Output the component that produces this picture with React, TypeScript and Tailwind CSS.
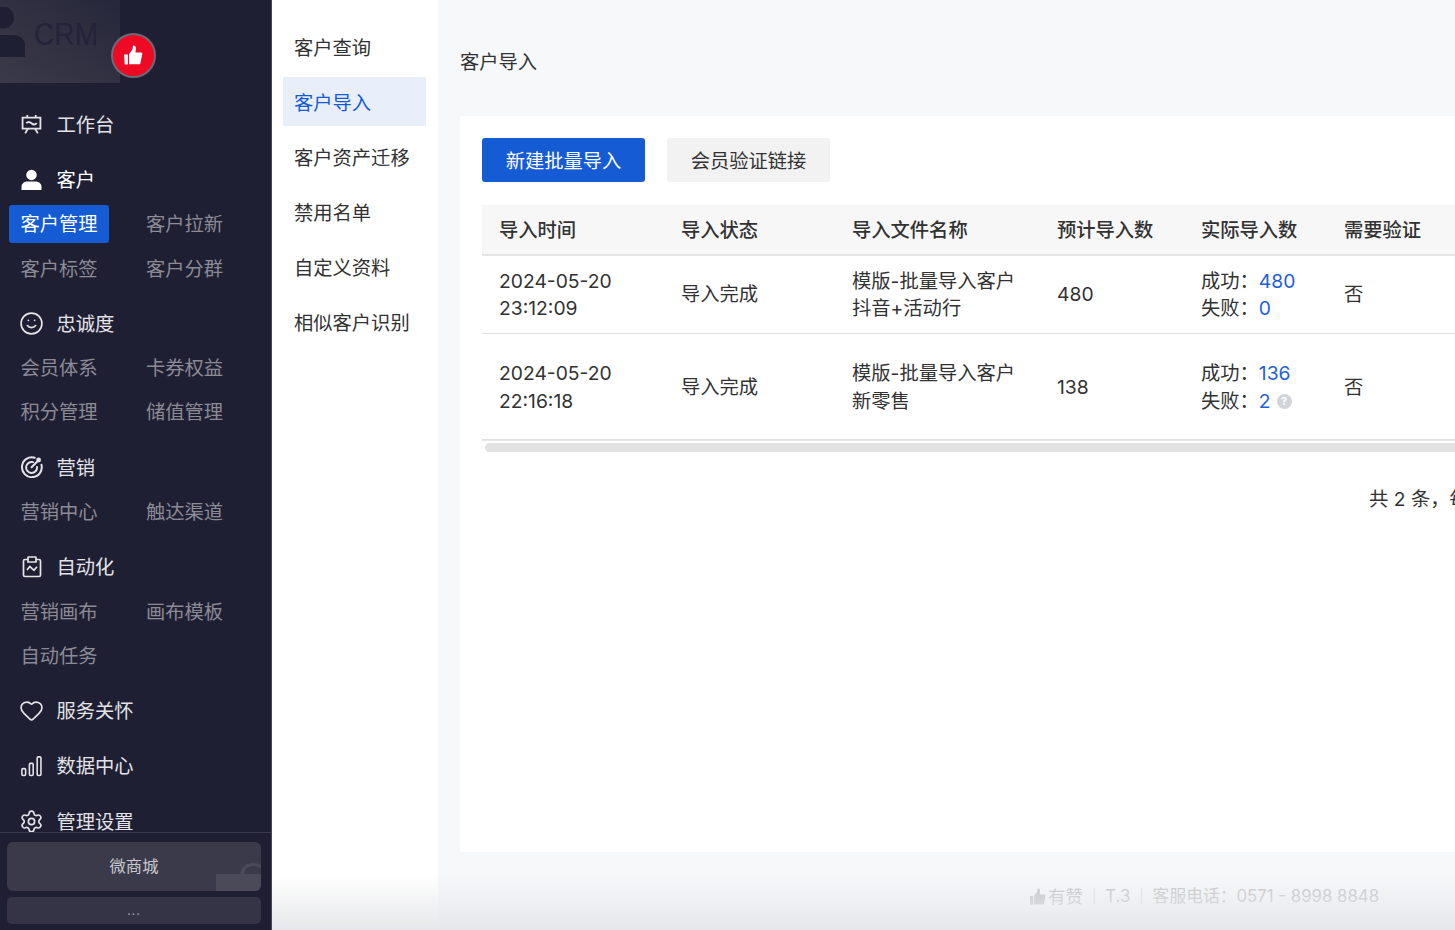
import { Heart, Settings, Smile } from 'lucide-react';
import type { ReactNode } from 'react';

const font = 'font-["Inter","Noto_Sans_CJK_SC",sans-serif]';

function WorkbenchIcon() {
  return (
    <svg viewBox="0 0 20 20" className="w-[21px] h-[21px]" fill="none" stroke="currentColor" strokeWidth="1.7">
      <path d="M1.5 3.5h17v10.5h-17z" />
      <path d="M5 8.800c1.600-1.600 3.200-1.600 5 0s3.400 1.600 5 0" />
      <path d="M6 1v2.500M14 1v2.500M6.500 14l-2.500 4.500M13.500 14l2.500 4.500" />
    </svg>
  );
}

function PersonIcon() {
  return (
    <svg viewBox="0 0 20 20" className="w-[21px] h-[21px]" fill="currentColor">
      <circle cx="10" cy="5.600" r="5" />
      <path d="M0.500 20v-3c0-3 2.600-5 5.500-5h8c2.900 0 5.500 2 5.500 5v3z" />
    </svg>
  );
}

function TargetIcon() {
  return (
    <svg viewBox="0 0 20 20" className="w-[22px] h-[22px] shrink-0" fill="none" stroke="currentColor" strokeWidth="1.800" strokeLinecap="round">
      <path d="M12.500 1.600A9 9 0 1 0 18.600 8" />
      <path d="M11 5.600A5 5 0 1 0 14.600 10" />
      <path d="M9.600 10.200l5-5" />
      <circle cx="16" cy="3.600" r="2.200" fill="currentColor" stroke="none" />
    </svg>
  );
}

function ClipboardIcon() {
  return (
    <svg viewBox="0 0 20 22" className="w-[20px] h-[22px] shrink-0" fill="none" stroke="currentColor" strokeWidth="1.700">
      <path d="M6 3.500H3a1.500 1.500 0 0 0-1.500 1.500v14A1.500 1.500 0 0 0 3 20.500h14a1.500 1.500 0 0 0 1.500-1.500V5A1.500 1.500 0 0 0 17 3.500h-3" />
      <path d="M6.500 1h7a.5.5 0 0 1 .5.5V6H6V1.500a.5.5 0 0 1 .5-.5z" />
      <path d="M5 14l2.800-3.500 4.200 3.800 3-3.500" />
    </svg>
  );
}

function BarsIcon() {
  return (
    <svg viewBox="0 0 20 20" className="w-[21px] h-[21px]" fill="none" stroke="currentColor" strokeWidth="1.500">
      <rect x="0.800" y="12" width="3.600" height="6.600" rx="1.200" />
      <rect x="8" y="7" width="3.600" height="11.600" rx="1.200" />
      <rect x="15.400" y="0.800" width="3.600" height="17.800" rx="1.200" />
    </svg>
  );
}

function ThumbIcon({ className }: { className: string }) {
  return (
    <svg viewBox="0 0 20 20" className={className} fill="currentColor">
      <path d="M1 9h3.600v9.500H1.600z" />
      <path d="M5.800 8.600l3.200-4.400.5-3.600c1.600-.3 2.900.8 2.800 2.700l-.5 3.900h5.400c.8 0 1.300.7 1.100 1.500l-1.700 8.600c-.1.600-.6 1-1.200 1H5.800z" />
    </svg>
  );
}

function Group({ icon, label, strong }: { icon: ReactNode; label: string; strong?: boolean }) {
  return (
    <div className={`flex items-center h-[44.3px] pl-[21px] gap-[14.5px] ${strong ? 'text-white' : 'text-[#e4e4e8]'}`}>
      <span className="w-[21px] h-[21px] flex items-center justify-center shrink-0">{icon}</span>
      <span className="text-[19.3px] leading-none pt-[2px] whitespace-nowrap">{label}</span>
    </div>
  );
}

function SubItems({ items, active }: { items: string[]; active?: string }) {
  return (
    <div className="grid grid-cols-[125.5px_125.5px] pl-[9px]">
      {items.map((item) => (
        <div key={item} className="h-[44.3px] flex items-center">
          <span
            className={`h-[38px] w-[100px] flex items-center pl-[11.5px] pt-[2px] rounded-[3px] text-[19.3px] whitespace-nowrap ${
              item === active ? 'bg-[#155bd4] text-white' : 'text-[#8b8b96]'
            }`}
          >
            {item}
          </span>
        </div>
      ))}
    </div>
  );
}

function Sidebar() {
  return (
    <aside className="w-[272px] h-full shrink-0 flex flex-col bg-[#1f1f33] border-r border-[#4a4a5c] overflow-hidden">
      <div className="flex-1 min-h-0 overflow-hidden">
        <div className="relative h-[102px]">
          <div className="relative h-[83px] w-[120px] overflow-hidden bg-gradient-to-tr from-[#3a3a49] to-[#27273b]">
            <svg viewBox="0 0 25 50" className="absolute left-0 top-[7px] w-[25px] h-[50px]" fill="#1f1f33">
              <circle cx="3" cy="10.500" r="11" />
              <path d="M-10 50V36c0-5 4-8 8-8h15c6 0 12 4 12 9v13z" />
            </svg>
            <span className="absolute left-[34px] top-[15px] origin-left scale-x-[0.88] text-[32px] leading-[38px] text-[#23233a] font-['Liberation_Sans',sans-serif]">CRM</span>
          </div>
          <div className="absolute left-[111px] top-[33px] w-[45px] h-[45px] rounded-full bg-[#ee0a24] border-2 border-[#6b6b78] flex items-center justify-center text-white">
            <ThumbIcon className="w-[21px] h-[21px]" />
          </div>
        </div>
        <div className="flex flex-col gap-[11px]">
          <Group icon={<WorkbenchIcon />} label="工作台" />
          <div>
            <Group icon={<PersonIcon />} label="客户" strong />
            <SubItems items={['客户管理', '客户拉新', '客户标签', '客户分群']} active="客户管理" />
          </div>
          <div>
            <Group icon={<Smile size={25} strokeWidth={1.6} className="shrink-0" />} label="忠诚度" />
            <SubItems items={['会员体系', '卡券权益', '积分管理', '储值管理']} />
          </div>
          <div>
            <Group icon={<TargetIcon />} label="营销" />
            <SubItems items={['营销中心', '触达渠道']} />
          </div>
          <div>
            <Group icon={<ClipboardIcon />} label="自动化" />
            <SubItems items={['营销画布', '画布模板', '自动任务']} />
          </div>
          <Group icon={<Heart size={25} strokeWidth={1.6} className="shrink-0" />} label="服务关怀" />
          <Group icon={<BarsIcon />} label="数据中心" />
          <Group icon={<Settings size={25} strokeWidth={1.6} className="shrink-0" />} label="管理设置" />
        </div>
      </div>
      <div className="h-[98px] shrink-0 border-t border-[#3a3a4a] pl-[7px] pr-[10px] pt-[9px] flex flex-col gap-[6px]">
        <div className="relative h-[49px] rounded-[6px] bg-[#3a3a4a] overflow-hidden flex items-center justify-center text-[16.3px] text-[#c8c8ce]">
          微商城
          <svg viewBox="0 0 45 30" className="absolute right-0 bottom-0 w-[45px] h-[30px]" fill="#4a4a58">
            <path d="M0 13h45v17H0z" />
            <path d="M24 13c1-7 6-11 12-11s9 2 9 2v3s-3-2-8-2-8 3-9 8z" />
          </svg>
        </div>
        <div className="h-[27px] rounded-[5px] bg-[#343446] flex items-center justify-center text-[13px] leading-none tracking-[1px] text-[#9a9aa6]">
          ...
        </div>
      </div>
    </aside>
  );
}

const subNav = ['客户查询', '客户导入', '客户资产迁移', '禁用名单', '自定义资料', '相似客户识别'];

function SubNav() {
  return (
    <nav className="w-[166px] h-full shrink-0 bg-white pl-[11px] pr-[12px] pt-[22px] flex flex-col gap-[6.200px]">
      {subNav.map((item) => (
        <div
          key={item}
          className={`h-[49px] flex items-center pl-[11px] pt-[3px] text-[19.3px] whitespace-nowrap ${
            item === '客户导入' ? 'bg-[#e8effb] text-[#155bd4]' : 'text-[#323233]'
          }`}
        >
          {item}
        </div>
      ))}
    </nav>
  );
}

const headers = ['导入时间', '导入状态', '导入文件名称', '预计导入数', '实际导入数', '需要验证'];

const rows = [
  { date: '2024-05-20', time: '23:12:09', file: '抖音+活动行', count: '480', ok: '480', fail: '0', h: 'h-[78px] pt-[1px]' },
  { date: '2024-05-20', time: '22:16:18', file: '新零售', count: '138', ok: '136', fail: '2', h: 'h-[106px] pt-[2px]', help: true },
];

function ImportTable() {
  return (
    <div className="w-[1444px]">
      <div className="grid grid-cols-[182px_171px_205px_144px_143px_1fr] h-[51px] items-center bg-[#f7f7f7] border-b-2 border-[#e5e5e5] pt-[2px] text-[19.3px] font-medium text-[#323233]">
        {headers.map((h) => (
          <div key={h} className="pl-[17px] whitespace-nowrap">{h}</div>
        ))}
      </div>
      {rows.map((r) => (
        <div
          key={r.time}
          className={`grid grid-cols-[182px_171px_205px_144px_143px_1fr] items-center border-b border-[#e0e0e0] text-[19.3px] leading-[27.500px] text-[#323233] ${r.h}`}
        >
          <div className="pl-[17px]">
            <div>{r.date}</div>
            <div>{r.time}</div>
          </div>
          <div className="pl-[17px]">导入完成</div>
          <div className="pl-[17px]">
            <div>模版-批量导入客户</div>
            <div>{r.file}</div>
          </div>
          <div className="pl-[17px]">{r.count}</div>
          <div className="pl-[17px]">
            <div>成功：<span className="text-[#1f5fdc]">{r.ok}</span></div>
            <div className="flex items-center">
              失败：<span className="text-[#1f5fdc]">{r.fail}</span>
              {r.help && (
                <span className="ml-[6px] w-[15px] h-[15px] rounded-full bg-[#d2d4d9] text-white text-[11px] leading-[15px] text-center font-bold">?</span>
              )}
            </div>
          </div>
          <div className="pl-[17px]">否</div>
        </div>
      ))}
      <div className="h-[16px] pl-[3px] pt-[2px] border-t border-[#e8e8e8]">
        <div className="h-[9px] rounded-full bg-[#e3e3e3]" />
      </div>
    </div>
  );
}

export default function App() {
  return (
    <div className={`relative flex h-[930px] w-full overflow-hidden bg-[#f7f8fa] ${font}`}>
      <Sidebar />
      <SubNav />
      <main className="w-[1532px] shrink-0 h-full flex flex-col">
        <h1 className="h-[116px] shrink-0 pl-[22px] pt-[8px] flex items-center text-[19.3px] font-normal text-[#323233]">客户导入</h1>
        <section className="h-[736px] w-[1488px] ml-[22px] shrink-0 bg-white pl-[22px] pt-[22px]">
          <div className="flex gap-[22px] text-[19.3px]">
            <button className="w-[163px] h-[44px] pt-[3px] rounded-[3px] bg-[#155bd4] text-white">新建批量导入</button>
            <button className="w-[163px] h-[44px] pt-[3px] rounded-[3px] bg-[#f2f2f2] text-[#323233]">会员验证链接</button>
          </div>
          <div className="mt-[23px]">
            <ImportTable />
          </div>
          <div className="mt-[30px] ml-[887px] text-[19.3px] leading-[27px] text-[#323233] whitespace-nowrap">共 2 条，每页 20 条</div>
        </section>
        <footer className="flex-1 flex items-center justify-center gap-[9px] pt-[12px] text-[16.800px] text-[#c4c5c9] whitespace-nowrap">
          <span className="flex items-center text-[17.500px]">
            <ThumbIcon className="w-[18px] h-[18px]" />
            <span className="ml-[1px]">有赞</span>
          </span>
          <span className="text-[13px] text-[#dcdde0]">|</span>
          <span>T.3</span>
          <span className="text-[13px] text-[#dcdde0]">|</span>
          <span>客服电话：0571 - 8998 8848</span>
        </footer>
      </main>
      <div className="pointer-events-none absolute left-[272px] right-0 bottom-0 h-[55px] bg-gradient-to-b from-transparent to-[#e6e7ea]" />
    </div>
  );
}
